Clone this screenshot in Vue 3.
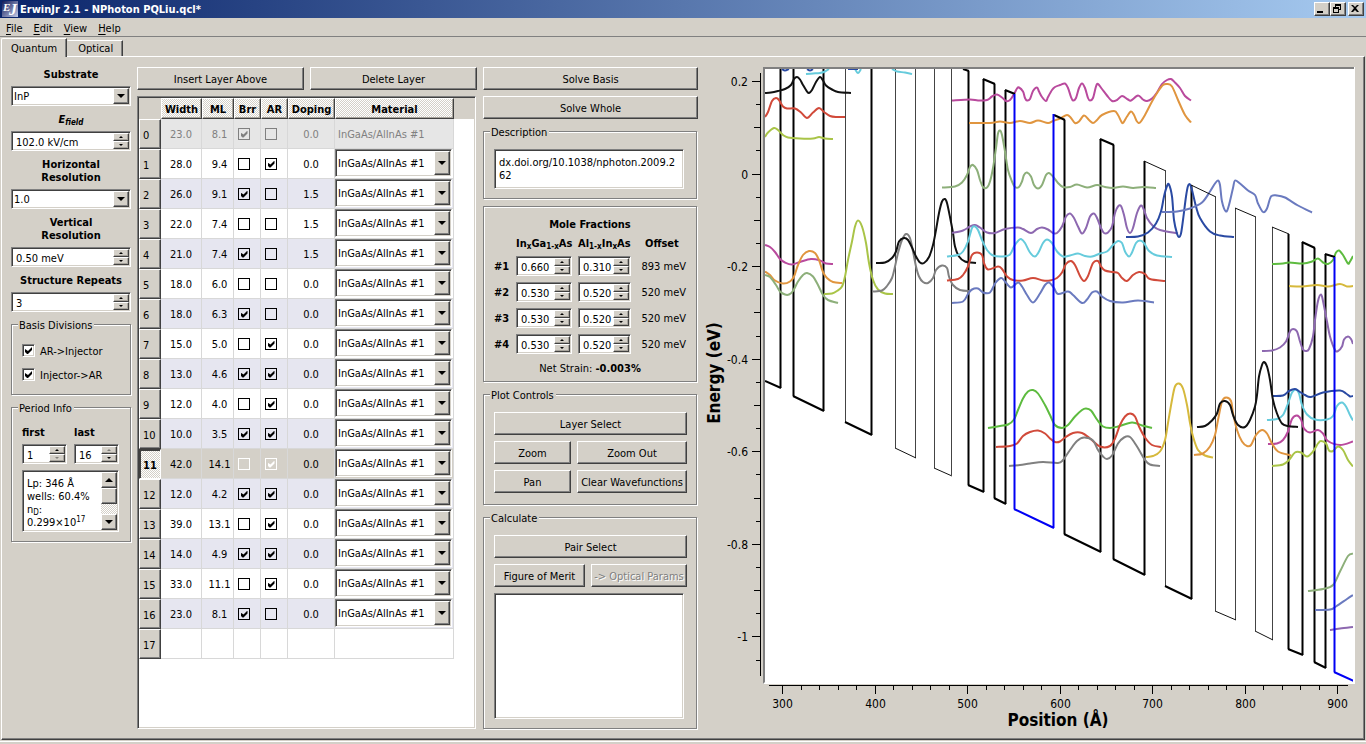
<script setup>
import { ref } from 'vue'

const menus = ['File', 'Edit', 'View', 'Help']

const material = 'InGaAs/AlInAs #1'
const layers = ref([
  { width: '23.0', ml: '8.1', brr: true, ar: false, doping: '0.0' },
  { width: '28.0', ml: '9.4', brr: false, ar: true, doping: '0.0' },
  { width: '26.0', ml: '9.1', brr: true, ar: false, doping: '1.5' },
  { width: '22.0', ml: '7.4', brr: false, ar: false, doping: '1.5' },
  { width: '21.0', ml: '7.4', brr: true, ar: false, doping: '1.5' },
  { width: '18.0', ml: '6.0', brr: false, ar: false, doping: '0.0' },
  { width: '18.0', ml: '6.3', brr: true, ar: false, doping: '0.0' },
  { width: '15.0', ml: '5.0', brr: false, ar: true, doping: '0.0' },
  { width: '13.0', ml: '4.6', brr: true, ar: true, doping: '0.0' },
  { width: '12.0', ml: '4.0', brr: false, ar: true, doping: '0.0' },
  { width: '10.0', ml: '3.5', brr: true, ar: true, doping: '0.0' },
  { width: '42.0', ml: '14.1', brr: false, ar: true, doping: '0.0' },
  { width: '12.0', ml: '4.2', brr: true, ar: true, doping: '0.0' },
  { width: '39.0', ml: '13.1', brr: false, ar: true, doping: '0.0' },
  { width: '14.0', ml: '4.9', brr: true, ar: true, doping: '0.0' },
  { width: '33.0', ml: '11.1', brr: false, ar: true, doping: '0.0' },
  { width: '23.0', ml: '8.1', brr: true, ar: false, doping: '0.0' },
])
const selected = 11

const fractions = [
  { id: '#1', a: '0.660', b: '0.310', offset: '893 meV' },
  { id: '#2', a: '0.530', b: '0.520', offset: '520 meV' },
  { id: '#3', a: '0.530', b: '0.520', offset: '520 meV' },
  { id: '#4', a: '0.530', b: '0.520', offset: '520 meV' },
]

/* Axis ticks */
const yTicks = []
for (let i = 0; i <= 25; i++) {
  const v = 20 - i * 5
  const y = Math.round(81 + i * 23.14) + 0.5
  if (y > 675) break
  const major = v % 20 === 0
  yTicks.push({ y, len: major ? 8 : v % 10 === 0 ? 6 : 4, label: major ? String(v / 100) : '' })
}
const xTicks = []
for (let i = 0; i <= 30; i++) {
  const major = i % 5 === 0
  xTicks.push({ x: Math.round(782 + i * 18.5) + 0.5, len: major ? 8 : 4, label: major ? String(300 + i * 20) : '' })
}

/* Conduction band edge: vertical walls, well bottoms and barrier tops */
const walls = [
  [780, 388], [793, 396], [823, 411], [871, 435], [968, 485, 71], [983, 492, 79], [994, 498, 84],
  [1005, 504, 90], [1064, 534, 120], [1100, 552, 139], [1113, 559, 145], [1144, 575, 161],
  [1191, 599, 185], [1288, 649, 234], [1302, 655, 242], [1314, 662, 248], [1325, 668, 254],
]
const thinWalls = [
  [845, 422], [895, 448], [915, 458], [934, 468], [951, 475], [1165, 586, 171], [1215, 611, 197],
  [1235, 620, 208], [1255, 631, 217], [1272, 640, 227],
]
const blueWalls = [[1014, 509, 94], [1053, 528, 114], [1334, 672, 257]]
const slopes = [
  [765, 381, 780, 388], [793, 396, 823, 411], [845, 422, 871, 435], [963, 69, 968, 71],
  [968, 485, 983, 492], [983, 79, 994, 84], [994, 498, 1005, 504], [1005, 90, 1014, 94],
  [1054, 115, 1064, 120], [1064, 534, 1100, 552], [1100, 139, 1113, 145], [1113, 559, 1144, 575],
  [1165, 586, 1191, 599], [1288, 649, 1302, 655], [1302, 242, 1314, 248], [1314, 662, 1325, 668],
  [1325, 254, 1334, 257],
]
const thinSlopes = [
  [895, 448, 915, 458], [934, 468, 951, 476], [1144, 161, 1165, 171], [1191, 185, 1215, 197],
  [1215, 611, 1235, 620], [1235, 208, 1255, 217], [1255, 631, 1272, 640], [1272, 227, 1288, 234],
]
const blueSlopes = [[1014, 509, 1053, 528], [1334, 672, 1353, 681]]
const wallPath = (list) => list.map(([x, b, t = 66]) => `M${x + 0.5} ${b}V${t}`).join('')
const slopePath = (list) => list.map(([a, b, c, d]) => `M${a} ${b}L${c + 1} ${d}`).join('')

/* Wavefunctions: colour and sample points */
const waves = [
  ['#111111', '765,93 771,92.5 778,91 785,89 791,85 794,79 797,77 800,79.5 803,85 807,91.5 809,93 812,90 816,82 820,77 823,80.5 826,85.5 832,89.5 838,92 851,93'],
  ['#d14a3a', '765,117 768,112 772,101 776,98 779,100 783,106.5 787,108.5 795,108.5 801,112.5 807,118 813,112.5 819,108 824,112 830,116 837,117 845,117'],
  ['#a9c447', '765,137 768,132.5 774,128 778,130 783,135 788,137.5 800,138.5 813,138.5 819,137 825,138.5 833,139'],
  ['#66cbdc', '806,74 813,73.5 820,73 825,71.5 829,69'],
  ['#66cbdc', '855,69 858,73 861,69'],
  ['#66cbdc', '892,69 897,71.5 905,72.5 912,74'],
  ['#2a4aa3', '782,69 785,70.5 789,69'],
  ['#2a4aa3', '807,69 810,70.5 813,69'],
  ['#2a4aa3', '848,69 858,69'],
  ['#b94a9d', '765,245 770,247 775,252 780,259 785,262.5 792,264.5 800,262 811,259 820,260.5 826,263.5 833,264'],
  ['#e0953f', '765,271.5 770,275 775,280.5 783,283.5 790,281.5 794,276.5 798,265 803,255 809,251 815,253 819,260 823,272 827,278 833,282 842,283'],
  ['#8daf7a', '765,275 770,277 776,285 780,291.5 785,294.5 789,294.5 793,291 798,281.5 803,275 807,273 813,276.5 818,285 823,295 828,300 838,303'],
  ['#a9c447', '824,294 832,293.5 837,291 842,286.5 845,276.5 848,260 852,241.5 855,226.5 858,220.5 862,226.5 866,243 869,263 873,280 878,289.5 885,293.5 893,294'],
  ['#808080', '873,291.5 882,290.5 887,286 892,278 895,266.5 898,253 902,240 906,234 910,238 913,251.5 916,266.5 919,276.5 923,282 928,283 933,278 936,270 942,265.5 947,268 949,276.5 953,285 960,290 971,291'],
  ['#111111', '876,263 885,262.5 892,258 896,251.5 899,241.5 904,238 908,240 912,247.5 916,256.5 920,262.5 924,263 929,257 933,245 936,230 939,213 942,201.5 945,199 947,203 950,217 953,233 955,246.5 959,256.5 965,261.5 976,263'],
  ['#8daf7a', '942,187.5 955,186.5 962,182.5 967,175 970,167 973,165 977,170 980,180 983,187 987,187.5 990,181.5 993,168 996,148 998,133.5 1000,130.5 1002,135 1005,151.5 1008,170 1012,181.5 1015,187 1019,187 1022,181.5 1024,175 1027,172.5 1031,176.5 1034,185 1038,188.5 1042,185 1046,175 1049,173 1053,176.5 1058,183 1063,187 1070,187 1077,184.5 1087,187.5 1097,185 1105,187 1113,188 1123,186.5 1133,188 1143,187 1156,188'],
  ['#b94a9d', '952,100.5 970,99.5 978,100.5 987,100 992,96.5 997,94.5 1002,97.5 1006,101 1010,100 1014,94 1017,88.5 1019,87.5 1023,91.5 1025,98 1027,100.5 1030,99 1033,91 1037,87.5 1039,91.5 1042,97 1046,101 1048,97 1052,90 1055,87 1060,85 1065,83.5 1068,88 1071,97 1073,100.5 1076,98 1079,88 1082,83.5 1085,88 1088,98 1090,100.5 1093,98 1096,86.5 1098,84 1102,89 1107,95.5 1112,101 1117,100 1122,96 1128,99.5 1131,100.5 1138,95.5 1143,99.5 1147,101 1152,98.5 1157,92.5 1162,84 1167,80 1171,79 1175,82.5 1180,88 1185,96 1191,100.5'],
  ['#e0953f', '969,123 990,123 1000,121.5 1010,123 1020,121 1030,123 1038,120.5 1048,123 1053,121 1060,118.5 1067,115 1071,118 1075,123 1079,121.5 1084,115.5 1089,120 1093,123 1097,120 1102,115 1114,111 1118,115 1121,121 1123,123 1127,116.5 1131,111.5 1134,115 1137,121.5 1140,122.5 1145,115 1152,101.5 1158,91.5 1163,85 1167,84 1172,86.5 1178,100 1185,115 1191,122.5'],
  ['#8d68b0', '952,233 963,230.5 970,226.5 975,225 980,227.5 987,232.5 995,233 1005,229 1018,227.5 1023,229 1031,233 1037,229 1042,227.5 1048,229.5 1053,233 1057,233 1062,226.5 1066,216.5 1070,213.5 1074,218 1078,226.5 1082,233.5 1086,228 1090,216.5 1094,213.5 1097,218 1101,228 1104,233 1108,232.5 1112,226.5 1115,213 1118,206.5 1121,206 1124,215 1127,228 1130,233 1133,228 1137,213 1141,205.5 1144,210 1147,218 1153,226 1160,230 1178,233.5'],
  ['#66cbdc', '947,256.5 958,255 963,251.5 968,241.5 972,228 975,226.5 978,230 982,240 987,250 993,255.5 1003,256.5 1010,254.5 1014,246.5 1018,241 1021,239 1025,243 1030,252.5 1035,256.5 1039,251.5 1043,243 1047,239.5 1052,243 1057,251.5 1063,256.5 1070,255.5 1078,253.5 1085,256 1092,256.5 1100,253.5 1107,251.5 1113,245 1118,241 1122,243 1125,251.5 1129,256.5 1132,252.5 1136,243 1140,240.5 1144,243 1149,251 1157,255.5 1172,257'],
  ['#d14a3a', '947,280.5 958,279 963,275 968,266.5 972,255 977,252.5 982,255 984,263 988,269.5 998,266.5 1002,269 1007,276.5 1013,280 1023,280.5 1033,278 1043,280.5 1050,280.5 1057,278 1062,272.5 1066,264 1071,261 1075,265 1080,276 1084,281 1088,276 1093,263 1098,261 1101,266.5 1105,270.5 1113,272 1118,273 1122,278 1127,281 1133,275 1139,272 1145,274 1150,279 1165,281'],
  ['#6a7abf', '952,303 963,301.5 968,294 972,289.5 978,288.5 983,292.5 990,292.5 995,283.5 1001,278 1005,281.5 1011,287.5 1018,282.5 1022,286.5 1027,295 1033,302.5 1040,293.5 1045,285 1049,282.5 1054,288 1058,294 1068,291.5 1073,295 1082,303 1087,299.5 1092,292.5 1097,291.5 1102,296.5 1110,301 1123,302.5 1138,300.5 1154,302.5'],
  ['#2a4aa3', '1126,237 1138,236.5 1148,232.5 1156,223.5 1161,211.5 1164,196.5 1167,186 1169,184.5 1172,196.5 1174,220 1177,233.5 1179,237 1181,233.5 1183,220 1186,196.5 1188,186 1190,184.5 1192,190 1196,206.5 1200,218 1210,231.5 1220,235.5 1234,237'],
  ['#6a7abf', '1162,212 1177,211.5 1190,208.5 1202,202.5 1210,191.5 1215,183.5 1218,180.5 1220,185 1222,201.5 1226,211.5 1229,205 1233,188 1235,180.5 1240,183.5 1248,190.5 1255,195 1258,203.5 1263,212 1267,208.5 1271,196.5 1277,195.5 1285,197.5 1298,205.5 1312,212.5'],
  ['#5dbb3f', '1272,264 1283,263.5 1289,262.5 1303,263.5 1312,261.5 1318,258.5 1323,262.5 1328,264 1333,260 1336,252.5 1339,250.5 1343,255 1348,263.5 1350,261.5 1353,256'],
  ['#d6b93c', '1289,286 1302,286.5 1317,285 1328,286.5 1340,284 1347,286.5 1353,286'],
  ['#8d68b0', '1262,351 1272,350.5 1280,347.5 1286,341.5 1290,331.5 1293,329 1297,331.5 1300,341.5 1303,349.5 1306,351 1309,349 1313,336.5 1315,320 1318,301 1321,294.5 1323,301 1327,321.5 1330,336.5 1335,350 1338,351 1342,346.5 1344,339.5 1348,336.5 1351,339 1353,344'],
  ['#66cbdc', '1267,420 1277,419 1283,415 1288,403.5 1292,392.5 1296,389.5 1299,393.5 1302,405 1307,414.5 1315,419.5 1327,419.5 1333,416 1337,406 1342,402.5 1346,406.5 1350,415 1353,420.5'],
  ['#2a4aa3', '1272,396 1283,395.5 1289,391 1295,389 1300,392 1305,395 1311,397 1323,392.5 1340,390.5 1346,393.5 1350,396.5 1353,396'],
  ['#b94a9d', '1268,444 1277,443.5 1283,440 1288,431.5 1292,419 1297,415.5 1301,419.5 1304,428.5 1310,432.5 1318,430 1323,433.5 1328,441 1340,445 1353,441.5'],
  ['#a9c447', '1272,466 1283,464.5 1289,460 1295,452.5 1301,452.5 1307,456.5 1313,451.5 1318,443.5 1321,441 1326,443.5 1329,450.5 1333,451 1338,446.5 1343,450 1348,460 1353,466.5'],
  ['#5dbb3f', '988,428 1000,426 1008,424.5 1014,419.5 1018,410 1023,398.5 1028,391.5 1033,390 1038,393.5 1045,405 1050,415 1055,425 1062,428 1068,425 1075,416.5 1082,410 1086,408.5 1091,410.5 1097,419.5 1103,426.5 1110,428 1118,426.5 1132,422.5 1142,425.5 1152,428'],
  ['#d14a3a', '996,447 1010,446 1017,443.5 1023,436 1030,432 1038,430.5 1045,433.5 1050,438.5 1055,442 1060,441.5 1065,437.5 1073,433 1082,433 1090,438.5 1100,446.5 1110,446 1115,438.5 1120,425 1125,416.5 1130,413.5 1135,416.5 1139,426.5 1145,437.5 1152,445 1161,447'],
  ['#808080', '1009,466 1020,465 1030,463.5 1043,462 1058,463 1063,460 1070,450 1077,441 1084,437.5 1093,440.5 1098,450 1103,456.5 1107,459 1112,455.5 1118,443.5 1124,437.5 1130,437 1137,446.5 1145,460 1150,464.5 1160,466'],
  ['#d6b93c', '1146,457 1153,456 1160,451.5 1165,440 1168,423 1172,400 1175,386.5 1179,383.5 1183,388.5 1187,405 1190,423 1193,436.5 1198,450 1205,455.5 1213,457.5'],
  ['#e0953f', '1194,455 1203,453.5 1210,446.5 1215,435 1218,420 1222,401.5 1226,397.5 1231,401 1233,413 1237,430 1242,441.5 1247,446 1251,445 1256,435 1262,430 1267,433.5 1272,443.5 1278,451.5 1291,455.5'],
  ['#111111', '1197,427 1205,426 1212,420.5 1217,413.5 1220,403.5 1225,401 1230,405 1233,415 1238,425 1245,427 1250,420 1255,406.5 1257,395 1259,376.5 1262,365 1264,362 1267,366.5 1270,380 1273,400 1277,413.5 1282,423.5 1288,426 1298,427'],
  ['#8daf7a', '1308,591 1323,589 1333,585 1340,571.5 1348,556 1353,553.5'],
  ['#6a7abf', '1315,610 1330,609.5 1336,606.5 1347,599 1353,595'],
  ['#8d68b0', '1330,630 1340,628.5 1353,627'],
]

function smooth(text) {
  const p = text.split(' ').map((s) => s.split(',').map(Number))
  let d = `M${p[0][0]} ${p[0][1]}`
  for (let i = 0; i < p.length - 1; i++) {
    const a = p[i - 1] || p[i]
    const b = p[i]
    const c = p[i + 1]
    const e = p[i + 2] || c
    d += `C${b[0] + (c[0] - a[0]) / 6} ${b[1] + (c[1] - a[1]) / 6} ${c[0] - (e[0] - b[0]) / 6} ${c[1] - (e[1] - b[1]) / 6} ${c[0]} ${c[1]}`
  }
  return d
}
const curves = waves.map(([color, pts]) => ({ color, d: smooth(pts) }))
</script>

<template>
  <div class="window">
    <header class="titlebar">
      <svg class="logo" viewBox="0 0 16 16" aria-hidden="true">
        <defs>
          <linearGradient id="lg" x1="0" y1="0" x2="1" y2="1">
            <stop offset="0" stop-color="#101a58" /><stop offset="1" stop-color="#c4cbe8" />
          </linearGradient>
        </defs>
        <rect width="16" height="16" fill="url(#lg)" />
        <text x="1" y="10" class="logo-e">E</text>
        <text x="7" y="14" class="logo-j">J</text>
      </svg>
      <h1>ErwinJr 2.1 - NPhoton PQLiu.qcl*</h1>
      <div class="winbtns">
        <button class="wb" aria-label="Minimize"><svg viewBox="0 0 12 11"><path d="M2 8h6v2H2z" /></svg></button>
        <button class="wb" aria-label="Restore"><svg viewBox="0 0 12 11"><path d="M4 1h6v6H8V6h1V3H5v1H4zM2 4h6v6H2zm1 2v3h4V6z" fill-rule="evenodd" /></svg></button>
        <button class="wb last" aria-label="Close"><svg viewBox="0 0 12 11"><path d="M2 2h2l2 2 2-2h2L7 5l3 4H8L6 7 4 9H2l3-4z" /></svg></button>
      </div>
    </header>

    <nav class="menubar">
      <button v-for="m in menus" :key="m" class="menu"><u>{{ m[0] }}</u>{{ m.slice(1) }}</button>
    </nav>

    <div class="tabs">
      <button class="tab active">Quantum</button>
      <button class="tab">Optical</button>
    </div>

    <main class="pane">
      <section class="col-left">
        <label class="cap" for="sub">Substrate</label>
        <span class="combo field"><select id="sub"><option>InP</option></select></span>
        <label class="cap" for="ef"><i>E<sub>field</sub></i></label>
        <span class="spin field"><input id="ef" type="text" value="102.0 kV/cm" /><span class="arrows"><button aria-label="Up" /><button aria-label="Down" /></span></span>
        <label class="cap" for="hr">Horizontal<br />Resolution</label>
        <span class="combo field"><select id="hr"><option>1.0</option></select></span>
        <label class="cap" for="vr">Vertical<br />Resolution</label>
        <span class="spin field"><input id="vr" type="text" value="0.50 meV" /><span class="arrows"><button aria-label="Up" /><button aria-label="Down" /></span></span>
        <label class="cap" for="sr">Structure Repeats</label>
        <span class="spin field"><input id="sr" type="text" value="3" /><span class="arrows"><button aria-label="Up" /><button aria-label="Down" /></span></span>

        <fieldset class="basis">
          <legend>Basis Divisions</legend>
          <label><input type="checkbox" class="sunk" checked /><span>AR-&gt;Injector</span></label>
          <label><input type="checkbox" class="sunk" checked /><span>Injector-&gt;AR</span></label>
        </fieldset>

        <fieldset class="period">
          <legend>Period Info</legend>
          <div class="pair">
            <div>
              <label for="pf">first</label>
              <span class="spin field"><input id="pf" type="text" value="1" /><span class="arrows"><button aria-label="Up" /><button aria-label="Down" disabled /></span></span>
            </div>
            <div>
              <label for="pl">last</label>
              <span class="spin field"><input id="pl" type="text" value="16" /><span class="arrows"><button aria-label="Up" disabled /><button aria-label="Down" /></span></span>
            </div>
          </div>
          <div class="info field">
            <div class="info-text">Lp: 346 Å<br />wells: 60.4%<br />n<sub>D</sub>:<br />0.299×10<sup>17</sup></div>
            <div class="scroll"><button class="sb up" aria-label="Scroll up" /><span class="thumb" /><button class="sb down" aria-label="Scroll down" /></div>
          </div>
        </fieldset>
      </section>

      <section class="col-table">
        <div class="row2">
          <button class="btn">Insert Layer Above</button>
          <button class="btn">Delete Layer</button>
        </div>
        <div class="grid field">
          <table>
            <colgroup><col class="c0" /><col class="c1" /><col class="c2" /><col class="c3" /><col class="c3" /><col class="c5" /><col class="c6" /><col /></colgroup>
            <thead>
              <tr><th class="corner"></th><th>Width</th><th>ML</th><th>Brr</th><th>AR</th><th>Doping</th><th>Material</th><th class="corner"></th></tr>
            </thead>
            <tbody>
              <tr v-for="(l, i) in layers" :key="i" :class="{ first: i === 0, alt: i && i % 2 === 0, sel: i === selected }">
                <th scope="row">{{ i }}</th>
                <td>{{ l.width }}</td>
                <td class="ml">{{ l.ml }}</td>
                <td class="ck"><input v-model="l.brr" type="checkbox" :disabled="i === 0" :aria-label="'Barrier ' + i" /></td>
                <td class="ck"><input v-model="l.ar" type="checkbox" :disabled="i === 0" :aria-label="'Active region ' + i" /></td>
                <td>{{ l.doping }}</td>
                <td class="mat">
                  <span v-if="i === 0">{{ material }}</span>
                  <span v-else class="combo tall field"><select :aria-label="'Material ' + i"><option>{{ material }}</option></select></span>
                </td>
                <td class="rest"></td>
              </tr>
              <tr><th scope="row">17</th><td></td><td></td><td></td><td></td><td></td><td></td><td class="rest"></td></tr>
            </tbody>
          </table>
        </div>
      </section>

      <section class="col-set">
        <button class="btn">Solve Basis</button>
        <button class="btn">Solve Whole</button>
        <fieldset class="desc">
          <legend>Description</legend>
          <textarea class="field" aria-label="Description">dx.doi.org/10.1038/nphoton.2009.262</textarea>
        </fieldset>
        <fieldset class="mole">
          <h2>Mole Fractions</h2>
          <div class="mgrid">
            <span></span>
            <b>In<sub>x</sub>Ga<sub>1-x</sub>As</b>
            <b>Al<sub>1-x</sub>In<sub>x</sub>As</b>
            <b class="offhead">Offset</b>
            <template v-for="f in fractions" :key="f.id">
              <b>{{ f.id }}</b>
              <span class="spin field"><input type="text" :value="f.a" :aria-label="'InGaAs ' + f.id" /><span class="arrows"><button aria-label="Up" /><button aria-label="Down" /></span></span>
              <span class="spin field"><input type="text" :value="f.b" :aria-label="'AlInAs ' + f.id" /><span class="arrows"><button aria-label="Up" /><button aria-label="Down" /></span></span>
              <span class="off">{{ f.offset }}</span>
            </template>
          </div>
          <p>Net Strain: <b>-0.003%</b></p>
        </fieldset>
        <fieldset class="ctl">
          <legend>Plot Controls</legend>
          <button class="btn wide">Layer Select</button>
          <button class="btn">Zoom</button>
          <button class="btn">Zoom Out</button>
          <button class="btn">Pan</button>
          <button class="btn">Clear Wavefunctions</button>
        </fieldset>
        <fieldset class="ctl calc">
          <legend>Calculate</legend>
          <button class="btn wide">Pair Select</button>
          <button class="btn">Figure of Merit</button>
          <button class="btn" disabled>-&gt; Optical Params</button>
          <textarea class="field wide" aria-label="Results"></textarea>
        </fieldset>
      </section>

      <section class="plot">
        <svg viewBox="703 57 660 681" preserveAspectRatio="xMinYMin meet" role="img" aria-label="Energy versus position">
          <clipPath id="area"><rect x="765" y="69" width="588" height="613" /></clipPath>
          <rect x="763" y="67" width="592" height="617" fill="#fff" />
          <path d="M763 684V67H1354V69H765V682z" fill="#808080" />
          <g clip-path="url(#area)">
            <path :d="wallPath(thinWalls)" stroke="#444" stroke-width="1" fill="none" />
            <path :d="wallPath(walls)" stroke="#000" stroke-width="2" fill="none" />
            <path v-for="(c, i) in curves" :key="i" :d="c.d" :stroke="c.color" stroke-width="2" fill="none" />
            <path :d="slopePath(thinSlopes)" stroke="#111" stroke-width="1" fill="none" />
            <path :d="slopePath(slopes)" stroke="#000" stroke-width="2" fill="none" />
            <path :d="wallPath(blueWalls) + slopePath(blueSlopes)" stroke="#0000f4" stroke-width="2" fill="none" />
          </g>
          <path d="M760.5 73V676M769 685.5H1348" stroke="#000" fill="none" />
          <g v-for="t in yTicks" :key="'y' + t.y">
            <path :d="`M${760 - t.len} ${t.y}H760`" stroke="#000" />
            <text v-if="t.label" x="748" :y="t.y + 4" text-anchor="end" class="tick">{{ t.label }}</text>
          </g>
          <g v-for="t in xTicks" :key="'x' + t.x">
            <path :d="`M${t.x} 686v${t.len}`" stroke="#000" />
            <text v-if="t.label" :x="t.x" y="708" text-anchor="middle" class="tick">{{ t.label }}</text>
          </g>
          <text x="1058" y="726" text-anchor="middle" class="axis">Position (Å)</text>
          <text transform="translate(720 373) rotate(-90)" text-anchor="middle" class="axis">Energy (eV)</text>
        </svg>
      </section>
    </main>
    <footer class="status"></footer>
  </div>
</template>

<style>
body {
  background: #d4d0c8;
}
</style>

<style scoped>
.window {
  --face: #d4d0c8;
  min-height: 100vh;
  display: flex;
  flex-direction: column;
  background: var(--face);
  color: #000;
  font: 11px/13px "DejaVu Sans Condensed", "DejaVu Sans", sans-serif;
}
.window *, .window *::before, .window *::after { box-sizing: border-box; }
button, input, select, textarea { font: inherit; color: inherit; margin: 0; border-radius: 0; }
sub, sup { font-size: 8px; line-height: 0; }
sub { vertical-align: -2px; }
sup { vertical-align: 4px; }

.titlebar {
  height: 18px;
  display: flex;
  align-items: center;
  padding: 0 2px;
  background: linear-gradient(90deg, #0a246a, #a6caf0);
}
.logo { width: 16px; height: 16px; }
.logo-e, .logo-j { fill: #fff; font: italic bold 11px "Liberation Serif", serif; }
.logo-j { font-size: 16px; }
h1 { margin: 0 0 0 2px; color: #fff; font-size: 11px; font-weight: bold; flex: 1; }
.winbtns { display: flex; }
.wb {
  width: 16px;
  height: 14px;
  padding: 0;
  background: var(--face);
  border: 1px solid;
  border-color: #fff #404040 #404040 #fff;
  box-shadow: inset -1px -1px #808080;
  display: flex;
}
.wb svg { width: 12px; height: 11px; }
.wb.last { margin-left: 2px; }

.menubar { height: 19px; display: flex; gap: 11px; padding: 4px 6px 0; border-bottom: 1px solid #808080; }
.menu { padding: 0; border: 0; background: none; line-height: 14px; height: 14px; }
.menu u { text-underline-offset: 2px; }

.tabs { display: flex; align-items: flex-end; height: 19px; padding-left: 1px; }
.tab {
  height: 16px;
  padding: 0 9px 0 10px;
  border: 1px solid;
  border-color: #fff #404040 transparent transparent;
  border-bottom: 0;
  box-shadow: inset -1px 0 #808080;
  background: var(--face);
}
.tab.active {
  height: 19px;
  margin-bottom: -1px;
  padding: 0 9px;
  border-left-color: #fff;
  border-radius: 2px 0 0 0;
  position: relative;
}

.pane {
  flex: 1;
  display: flex;
  gap: 6px;
  margin: 0 1px;
  padding: 10px 0 10px 9px;
  border: 1px solid;
  border-color: #fff #404040 #404040 #fff;
  box-shadow: inset -1px -1px #808080;
}
.status { height: 4px; border-top: 1px solid var(--face); box-shadow: inset 0 1px #fff; }

.field {
  background: #fff;
  border: 1px solid;
  border-color: #808080 #fff #fff #808080;
  box-shadow: inset 1px 1px #404040, inset -1px -1px var(--face);
}
.btn {
  height: 23px;
  padding: 2px 0 0;
  background: var(--face);
  border: 1px solid;
  border-color: #fff #404040 #404040 #fff;
  box-shadow: inset -1px -1px #808080;
  white-space: nowrap;
}
.btn:disabled { color: #808080; text-shadow: 1px 1px #fff; }

fieldset {
  margin: 0;
  padding: 0 10px;
  min-width: 0;
  border: 1px solid #808080;
  box-shadow: 1px 1px #fff, inset 1px 1px #fff;
}
legend { height: 13px; margin-left: -4px; padding: 1px 2px 0 1px; background: var(--face); line-height: 13px; }

.combo { position: relative; display: flex; height: 20px; }
.combo select { appearance: none; flex: 1; min-width: 0; border: 0; background: none; padding: 1px 18px 0 2px; outline: 0; }
.combo::before {
  content: "";
  position: absolute;
  top: 1px;
  right: 1px;
  bottom: 1px;
  width: 16px;
  background: var(--face);
  border: 1px solid;
  border-color: #fff #404040 #404040 #fff;
  box-shadow: inset -1px -1px #808080;
  pointer-events: none;
}
.combo::after {
  content: "";
  position: absolute;
  top: calc(50% - 2px);
  right: 5px;
  border: 4px solid transparent;
  border-top-color: #000;
  border-bottom: 0;
  pointer-events: none;
}

.spin { display: flex; height: 20px; padding: 1px; }
.spin input { flex: 1; width: 0; min-width: 0; border: 0; padding: 2px 0 0 3px; background: none; outline: 0; }
.arrows { display: flex; flex-direction: column; width: 16px; }
.arrows button {
  flex: 1;
  min-height: 0;
  padding: 0;
  background: var(--face);
  border: 1px solid;
  border-color: #fff #404040 #404040 #fff;
  box-shadow: inset -1px -1px #a8a49c;
  display: flex;
  align-items: center;
  justify-content: center;
}
.arrows button::after { content: ""; border: 2px solid transparent; border-bottom-color: #000; border-top: 0; }
.arrows button:last-child::after { border-top: 2px solid #000; border-bottom: 0; }
.arrows button:disabled::after { opacity: 0.4; }

input[type="checkbox"] {
  appearance: none;
  width: 12px;
  height: 12px;
  margin: 0;
  border: 1px solid currentColor;
  display: grid;
  place-content: center;
}
input[type="checkbox"]:checked::before {
  content: "";
  width: 7px;
  height: 7px;
  background: currentColor;
  clip-path: polygon(0 2px, 3px 4px, 7px 0, 7px 3px, 3px 7px, 2px 7px, 0 5px);
}
input[type="checkbox"].sunk {
  width: 13px;
  height: 13px;
  background: #fff;
  border-color: #808080 #fff #fff #808080;
  box-shadow: inset 1px 1px #404040, inset -1px -1px var(--face);
}

.col-left { width: 120px; display: flex; flex-direction: column; gap: 6px; }
.cap { padding-top: 1px; margin-bottom: -1px; text-align: center; font-weight: bold; }
.basis { height: 77px; display: flex; flex-direction: column; gap: 11px; padding-top: 13px; }
.basis label { display: flex; align-items: center; gap: 5px; height: 13px; }
.basis label span { padding-top: 1px; }
.period { height: 141px; padding-top: 12px; }
.pair { display: flex; gap: 7px; margin-bottom: 6px; }
.pair > div { width: 45px; display: flex; flex-direction: column; gap: 5px; }
.pair label { font-weight: bold; }
.info { display: flex; height: 62px; width: 97px; padding: 1px; }
.info-text { flex: 1; padding: 5px 0 0 3px; overflow: hidden; white-space: nowrap; }
.scroll {
  width: 16px;
  display: flex;
  flex-direction: column;
  background: repeating-conic-gradient(#fff 0 25%, #d4d0c8 0 50%) 0 0 / 2px 2px;
}
.sb, .thumb { height: 16px; padding: 0; background: var(--face); border: 1px solid; border-color: #fff #404040 #404040 #fff; box-shadow: inset -1px -1px #808080; }
.sb { display: grid; place-content: center; }
.sb::after { content: ""; border: 4px solid transparent; border-bottom-color: #000; border-top: 0; }
.sb.down { margin-top: auto; }
.sb.down::after { border-top: 4px solid #000; border-bottom: 0; }

.col-table { width: 340px; display: flex; flex-direction: column; gap: 6px; }
.row2 { display: grid; grid-template-columns: 1fr 1fr; gap: 6px; }
.grid { flex: 1; padding: 1px; margin-right: 1px; }
table { border-collapse: separate; border-spacing: 0; table-layout: fixed; width: 100%; }
.c0 { width: 22px; }
.c1 { width: 41px; }
.c2 { width: 32px; }
.c3 { width: 27px; }
.c5 { width: 47px; }
.c6 { width: 119px; }
th { padding: 2px 0 0; font-weight: bold; }
thead th {
  height: 21px;
  background: repeating-conic-gradient(#fff 0 25%, #d4d0c8 0 50%) 0 0 / 2px 2px;
  border: 1px solid;
  border-color: #fff #404040 #404040 #fff;
  box-shadow: inset -1px -1px #a8a49c;
}
thead th.corner { background: var(--face); border: 0; box-shadow: none; }
tbody th {
  height: 30px;
  background: var(--face);
  font-weight: normal;
  text-align: left;
  padding-left: 3px;
  border: 1px solid;
  border-color: #fff #404040 #404040 #fff;
  box-shadow: inset -1px -1px #808080;
}
td { height: 30px; padding: 2px 0 0; text-align: center; border: 1px solid #d8d8d8; border-width: 0 1px 1px 0; }
td.ml { padding-left: 4px; }
td.ck { padding-top: 1px; }
td.ck input { margin-left: 4px; }
td.mat { padding: 0; text-align: left; vertical-align: top; }
td.mat > span:not(.combo) { display: block; padding: 9px 0 0 3px; }
td.rest { border: 0; background: #fff; }
.combo.tall { height: 28px; width: 117px; }
.first td:not(.rest) { background: #e6e6e6; color: #808080; }
.alt td:not(.rest) { background: #e6e6f0; }
.sel td:not(.rest) { background: var(--face); }
.sel td.ck { color: #fff; }
.sel th {
  font-weight: bold;
  background: repeating-conic-gradient(#fff 0 25%, #d4d0c8 0 50%) 0 0 / 2px 2px;
  border-color: #404040 #fff #fff #404040;
  box-shadow: inset 1px 1px #404040;
}

.col-set { width: 215px; display: flex; flex-direction: column; gap: 6px; }
.desc { height: 74px; padding-top: 11px; }
textarea { display: block; width: 190px; height: 40px; padding: 6px 4px 0; resize: none; outline: 0; word-break: break-all; overflow: hidden; }
.desc, .mole, .ctl { margin-right: 1px; }
.mole { height: 176px; margin-top: 1px; padding-top: 11px; }
h2 { margin: 0; font-size: 11px; line-height: 13px; text-align: center; }
.mgrid {
  display: grid;
  grid-template-columns: 16px 56px 53px 1fr;
  grid-template-rows: 13px repeat(4, 20px);
  gap: 6px;
  margin-top: 6px;
  align-items: center;
  white-space: nowrap;
}
.off { text-align: right; }
.offhead { padding-left: 8px; }
p { margin: 8px 0 0; text-align: center; }
.ctl { display: grid; grid-template-columns: 77px 110px; gap: 6px; padding-top: 11px; height: 117px; align-content: start; }
.wide { grid-column: 1 / -1; }
.calc { grid-template-columns: 91px 96px; flex: 1; grid-template-rows: 23px 23px 1fr; align-content: stretch; padding-bottom: 9px; }
.calc textarea { height: 100%; }

.plot { flex: 1; min-width: 0; margin: -10px 1px -10px -1px; }
.plot svg { display: block; width: 100%; height: 100%; }
.tick { font: 12px "DejaVu Sans Condensed", "DejaVu Sans", sans-serif; }
.axis { font: bold 17px "DejaVu Sans Condensed", "DejaVu Sans", sans-serif; }
</style>
